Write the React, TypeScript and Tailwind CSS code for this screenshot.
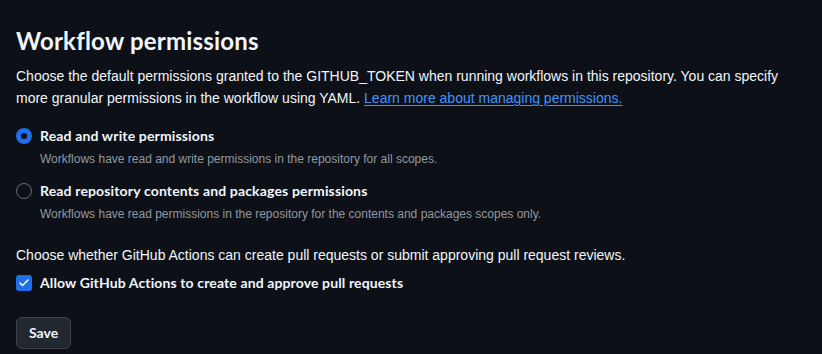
import { Check } from "lucide-react";

const font = { fontFamily: '"Liberation Sans", Arial, sans-serif' };
const bold = { fontFamily: 'Lato, "Liberation Sans", sans-serif' };

function Radio({ checked, title, desc }: { checked?: boolean; title: string; desc: string }) {
  return (
    <div className="flex gap-2">
      <div className="pt-[3px]">
        {checked ? (
          <div className="w-4 h-4 rounded-full bg-[#1f6feb] flex items-center justify-center">
            <div className="w-[6px] h-[6px] rounded-full bg-[#0d1117]" />
          </div>
        ) : (
          <div className="w-4 h-4 rounded-full border border-[#656c76]" />
        )}
      </div>
      <div>
        <div className="text-sm font-bold text-[#f0f6fc] leading-[21px] tracking-[0.15px]" style={bold}>
          {title}
        </div>
        <div className="text-xs text-[#9198a1] leading-[18px] mt-[4px]">{desc}</div>
      </div>
    </div>
  );
}

export default function App() {
  return (
    <div className="w-[822px] h-[354px] bg-[#0d1117] px-4 pt-[23px]" style={font}>
      <h2 className="text-[24px] font-bold text-[#f0f6fc] leading-[36px] tracking-[0.2px]" style={bold}>
        Workflow permissions
      </h2>
      <p className="mt-[6px] text-sm text-[#f0f6fc] leading-[22px]">
        Choose the default permissions granted to the GITHUB_TOKEN when running workflows in this repository. You can specify more granular permissions in the workflow using YAML.{" "}
        <a className="text-[#4493f8] underline underline-offset-2">Learn more about managing permissions.</a>
      </p>
      <div className="mt-[16px] flex flex-col gap-[12px]">
        <Radio checked title="Read and write permissions" desc="Workflows have read and write permissions in the repository for all scopes." />
        <Radio title="Read repository contents and packages permissions" desc="Workflows have read permissions in the repository for the contents and packages scopes only." />
      </div>
      <p className="mt-[22px] text-sm text-[#f0f6fc] leading-[21px]">
        Choose whether GitHub Actions can create pull requests or submit approving pull request reviews.
      </p>
      <div className="mt-[7px] flex items-center gap-2">
        <div className="w-4 h-4 rounded-[3px] bg-[#1f6feb] flex items-center justify-center">
          <Check size={12} strokeWidth={3} color="#ffffff" />
        </div>
        <span className="text-sm font-bold text-[#f0f6fc] tracking-[0.12px]" style={bold}>
          Allow GitHub Actions to create and approve pull requests
        </span>
      </div>
      <button
        className="mt-[24px] h-8 px-[12px] rounded-md bg-[#212830] border border-[#3d444d] text-sm font-bold text-[#f0f6fc]"
        style={bold}
      >
        Save
      </button>
    </div>
  );
}
